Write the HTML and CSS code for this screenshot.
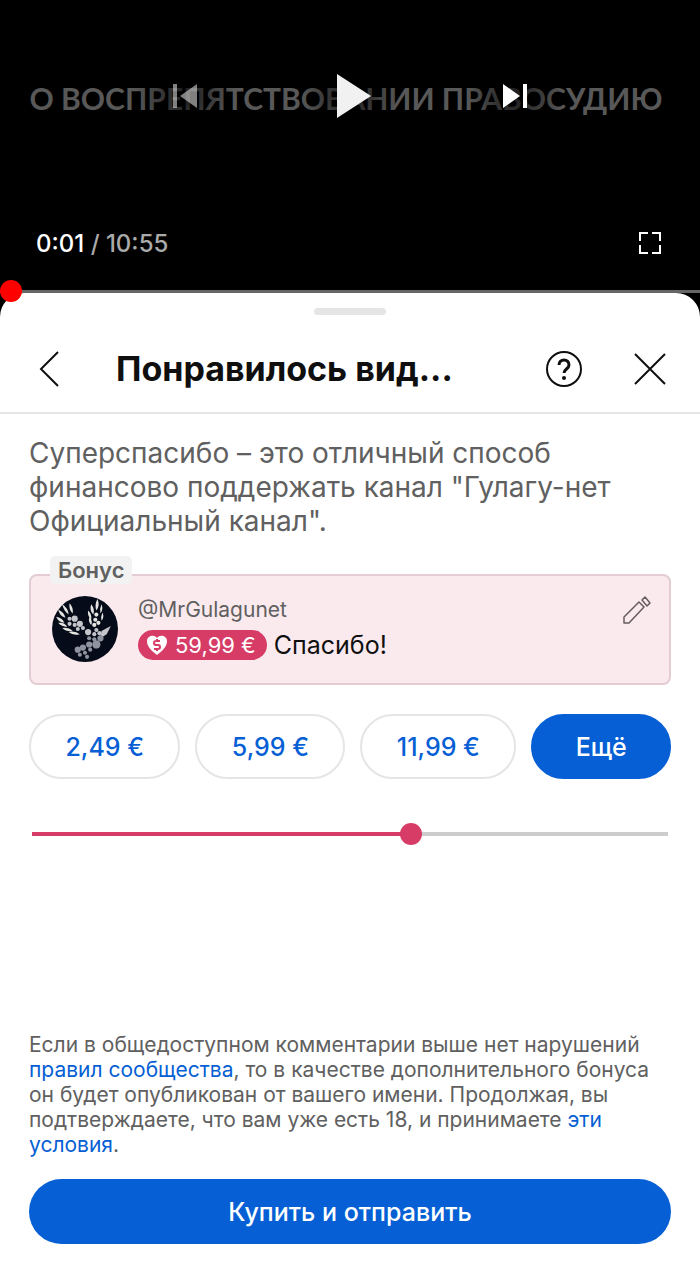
FILE: index.html
```html
<!DOCTYPE html>
<html lang="ru">
<head>
<meta charset="UTF-8">
<meta name="viewport" content="width=device-width, initial-scale=1.0">
  <title>Суперспасибо</title>
  <link rel="stylesheet" href="styles.css">
</head>
<body>

<div class="player">
  <div class="stage">
    <p class="caption">О ВОСПРЕПЯТСТВОВАНИИ ПРАВОСУДИЮ</p>
    <div class="controls">
      <button class="control prev" aria-label="Предыдущее видео" disabled>
        <svg width="24" height="24" viewBox="0 0 24 24" fill="#fff"><path d="M0 0h4v24H0zM24 0v24L7 12z"/></svg>
      </button>
      <button class="control" aria-label="Смотреть">
        <svg width="44" height="44" viewBox="0 0 44 44" fill="#f1f1f1"><path d="M9 0l34 22L9 44z"/></svg>
      </button>
      <button class="control" aria-label="Следующее видео">
        <svg width="24" height="24" viewBox="0 0 24 24" fill="#fff"><path d="M0 0v24l17-12zM20 0h4v24h-4z"/></svg>
      </button>
    </div>
  </div>
  <div class="player-bottom">
    <div class="time">0:01 <span>/ 10:55</span></div>
    <button class="icon-button" aria-label="Во весь экран">
      <svg width="22" height="22" viewBox="0 0 22 22" fill="none" stroke="#fff" stroke-width="2"><path d="M9 1H1v8M13 1h8v8M9 21H1v-8M13 21h8v-8"/></svg>
    </button>
  </div>
  <div class="progress"></div>
</div>

<main class="sheet">
  <div class="grabber"></div>

  <header class="sheet-header">
    <button class="icon-button" aria-label="Назад">
      <svg width="36" height="36" viewBox="0 0 36 36" fill="none" stroke="#0f0f0f" stroke-width="2"><path d="M26 1L9 18l17 17"/></svg>
    </button>
    <h1>Понравилось вид...</h1>
    <button class="icon-button" aria-label="Справка">
      <svg width="36" height="36" viewBox="0 0 36 36" fill="none" stroke="#0f0f0f">
        <circle cx="18" cy="18" r="17" stroke-width="2"/>
        <path d="M13 14c0-3 2-5 5-5s5 2 5 5c0 4-5 4-5 8" stroke-width="3"/>
        <circle cx="18" cy="27" r="2" fill="#0f0f0f" stroke="none"/>
      </svg>
    </button>
    <button class="icon-button" aria-label="Закрыть">
      <svg width="36" height="36" viewBox="0 0 36 36" fill="none" stroke="#0f0f0f" stroke-width="2"><path d="M3 3l30 30M33 3L3 33"/></svg>
    </button>
  </header>

  <div class="content">
    <p class="intro">Суперспасибо – это отличный способ финансово поддержать канал "Гулагу-нет Официальный канал".</p>

    <section class="comment">
      <span class="badge">Бонус</span>
      <svg class="avatar" viewBox="0 0 64 64">
        <circle cx="32" cy="32" r="32" fill="#050b18"/>
        <!-- wings -->
        <g fill="#e6e4e0">
          <path d="M20 17q-4-4-3-10 4 4 3 10zM16 18q-5-4-6-10 6 4 6 10zM13 21q-6-2-7-8 6 3 7 8zM12 26q-6-1-8-6 6 1 8 6zM15 30q-6 0-9-4 6-1 9 4zM20 34q-6 1-10-3 6-1 10 3zM27 37q-6 2-11-2 6-2 11 2z"/>
          <path d="M43 14q-2-5 1-11 3 6-1 11zM40 18q-4-4-2-10 4 5 2 10zM38 23q-4-4-3-9 4 4 3 9zM47 17q-1-5 1-9 2 5-1 9zM38 28q-3-3-2-7 4 3 2 7zM48 24q-1-4 1-8 2 5-1 8z"/>
          <circle cx="43" cy="18" r="2"/><circle cx="42" cy="23" r="2"/><circle cx="45" cy="26" r="2"/><circle cx="41" cy="28" r="2"/>
        </g>
        <!-- body -->
        <g fill="#c4c5cb">
          <circle cx="17" cy="22" r="2"/><circle cx="22" cy="22" r="3"/><circle cx="17" cy="27" r="2"/><circle cx="22" cy="28" r="2"/>
          <circle cx="27" cy="27" r="3"/><circle cx="25" cy="32" r="2"/><circle cx="30" cy="31" r="2"/><circle cx="35" cy="35" r="3"/>
          <circle cx="43" cy="33" r="2"/><circle cx="41" cy="37" r="2"/><circle cx="46" cy="36" r="2"/>
          <path d="M48 34l9-5-4 8-6 4z"/>
        </g>
        <!-- tail -->
        <g fill="#8f929f">
          <circle cx="47" cy="41" r="3"/><circle cx="41" cy="42" r="2"/><circle cx="36" cy="41" r="2"/><circle cx="43" cy="47" r="4"/>
          <circle cx="36" cy="47" r="3"/><circle cx="30" cy="50" r="3"/><circle cx="25" cy="52" r="3"/><circle cx="37" cy="52" r="2"/>
          <circle cx="32" cy="55" r="2"/><circle cx="27" cy="57" r="2"/><circle cx="34" cy="59" r="2"/>
        </g>
      </svg>
      <div class="comment-body">
        <div class="handle">@MrGulagunet</div>
        <div class="message">
          <span class="amount">
            <svg width="20" height="20" viewBox="0 0 20 20">
              <path d="M10 20C5 16 0 12 0 6c0-5 7-7 10-3 3-4 10-2 10 3 0 6-5 10-10 14z" fill="#fff"/>
              <path d="M13 6L9 6Q7 6 7 8T9 10h2q2 0 2 2t-2 2H7M10 4v2M10 14v2" fill="none" stroke="#d63c66" stroke-width="2"/>
            </svg>
            59,99 €
          </span>
          <span>Спасибо!</span>
        </div>
      </div>
      <button class="icon-button edit" aria-label="Изменить">
        <svg width="28" height="28" viewBox="0 0 28 28" fill="none" stroke="#665c60" stroke-width="1.5" stroke-linejoin="round"><path d="M1 27v-6L16 6l5 5L6 27zM19 4l3-3 5 6-3 3z"/></svg>
      </button>
    </section>

    <div class="prices">
      <button class="price">2,49 €</button>
      <button class="price">5,99 €</button>
      <button class="price">11,99 €</button>
      <button class="price selected">Ещё</button>
    </div>

    <input class="slider" type="range" min="0" max="100" value="60" aria-label="Сумма" style="--fill: 60%" oninput="this.style.setProperty('--fill', this.value + '%')">

    <p class="terms">Если в общедоступном комментарии выше нет нарушений <a href="#">правил сообщества</a>, то в качестве дополнительного бонуса он будет опубликован от вашего имени. Продолжая, вы подтверждаете, что вам уже есть 18, и принимаете <a href="#">эти условия</a>.</p>
    <button class="buy">Купить и отправить</button>
  </div>
</main>

</body>
</html>
```
FILE: styles.css
```css
* {
  box-sizing: border-box;
}
body {
  margin: 0;
  min-height: 100vh;
  display: flex;
  flex-direction: column;
  background-color: #000;
  color: #0f0f0f;
  font-family: Inter, "Liberation Sans", sans-serif;
}
h1, p {
  margin: 0;
}
button {
  border: none;
  padding: 0;
  background: none;
  font-family: inherit;
  cursor: pointer;
}
svg {
  display: block;
  flex-shrink: 0;
}
.icon-button {
  display: flex;
}

/* video */
.player {
  background-color: #000;
  color: #fff;
}
.stage {
  display: grid;
  align-items: center;
  height: 192px;
}
.caption, .controls {
  grid-area: 1 / 1;
}
.caption {
  padding: 4px 8px 0 0;
  text-align: center;
  white-space: nowrap;
  color: #585858;
  font-family: Lato, sans-serif;
  font-size: 30px;
  font-weight: bold;
}
.controls {
  display: flex;
  justify-content: center;
  gap: 65px;
}
.control {
  display: flex;
  align-items: center;
  justify-content: center;
  width: 100px;
  height: 100px;
  background: radial-gradient(closest-side, rgba(0, 0, 0, 0.7), transparent);
}
.prev svg {
  opacity: 0.5;
}
.player-bottom {
  display: flex;
  align-items: center;
  justify-content: space-between;
  height: 98px;
  padding: 4px 39px 0 36px;
}
.time {
  font-size: 24px;
  font-weight: 500;
}
.time span {
  color: #aaa;
}
.progress {
  position: relative;
  height: 24px;
  margin-bottom: -21px;
  border-top: 3px solid #666;
}
.progress::after {
  content: "";
  position: absolute;
  z-index: 2;
  top: -13px;
  left: 0;
  width: 22px;
  height: 22px;
  border-radius: 50%;
  background-color: #f00;
}

/* bottom sheet */
.sheet {
  position: relative;
  flex: 1;
  display: flex;
  flex-direction: column;
  border-radius: 24px 24px 0 0;
  background-color: #fff;
}
.grabber {
  width: 72px;
  height: 7px;
  margin: 15px auto 0;
  border-radius: 4px;
  background-color: #e5e5e5;
}
.sheet-header {
  display: flex;
  align-items: center;
  height: 99px;
  padding: 10px 32px 0;
  border-bottom: 2px solid #e5e5e5;
}
.sheet-header h1 {
  flex: 1;
  margin-left: 48px;
  font-size: 34px;
  font-weight: bold;
  white-space: nowrap;
}
.sheet-header h1 + .icon-button {
  margin-right: 50px;
}
.content {
  flex: 1;
  display: flex;
  flex-direction: column;
  padding: 22px 29px 36px;
}
.intro {
  color: #606060;
  font-size: 28px;
  line-height: 34px;
}
.comment {
  position: relative;
  display: flex;
  align-items: flex-start;
  margin-top: 36px;
  padding: 20px 18px 21px 21px;
  border: 2px solid #e3cdd3;
  border-radius: 8px;
  background-color: #faeaee;
}
.badge {
  position: absolute;
  top: -20px;
  left: 19px;
  padding: 0 8px;
  border-radius: 5px;
  background-color: #f2f2f2;
  color: #606060;
  font-size: 22px;
  font-weight: 600;
  line-height: 28px;
}
.avatar {
  width: 66px;
  height: 66px;
}
.comment-body {
  flex: 1;
  margin-left: 20px;
}
.handle {
  color: #606060;
  font-size: 21px;
  line-height: 28px;
}
.message {
  display: flex;
  align-items: center;
  gap: 7px;
  margin-top: 6px;
  font-size: 25px;
  line-height: 30px;
}
.amount {
  display: flex;
  align-items: center;
  gap: 8px;
  padding: 0 11px 0 9px;
  border-radius: 15px;
  background-color: #d63c66;
  color: #fff;
  font-size: 22px;
}
.prices {
  display: flex;
  gap: 15px;
  margin-top: 29px;
}
.price {
  flex: 1 1 auto;
  height: 65px;
  padding: 0 20px;
  border: 2px solid #e5e5e5;
  border-radius: 33px;
  color: #065fd4;
  font-size: 25px;
  font-weight: 500;
}
.price.selected {
  padding: 0 28px;
  border-color: #065fd4;
  background-color: #065fd4;
  color: #fff;
}
.slider {
  -webkit-appearance: none;
  appearance: none;
  height: 22px;
  margin: 44px 3px 40px;
  background: linear-gradient(#d63c66, #d63c66) left / var(--fill) 4px no-repeat, linear-gradient(#ccc, #ccc) center / 100% 4px no-repeat;
}
.slider::-webkit-slider-thumb {
  -webkit-appearance: none;
  width: 22px;
  height: 22px;
  border-radius: 50%;
  background-color: #d63c66;
}
.terms {
  margin-top: auto;
  color: #606060;
  font-size: 21px;
  line-height: 25px;
}
.terms a {
  color: #065fd4;
  text-decoration: none;
}
.buy {
  height: 65px;
  margin-top: 22px;
  border-radius: 33px;
  background-color: #065fd4;
  color: #fff;
  font-size: 25px;
  font-weight: 500;
}
```
